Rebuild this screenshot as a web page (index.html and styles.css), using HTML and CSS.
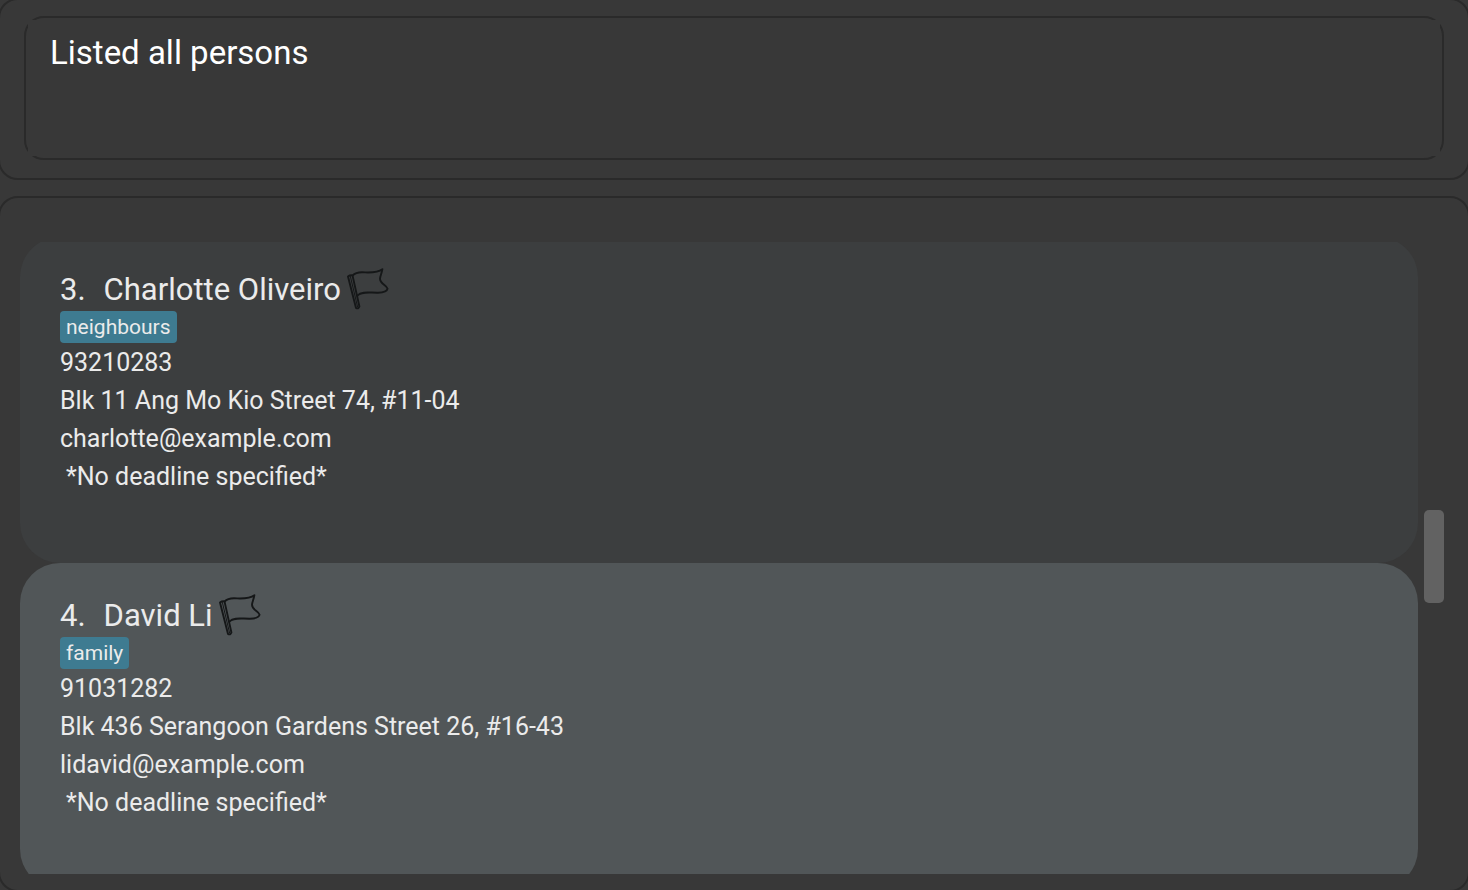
FILE: index.html
```html
<!DOCTYPE html>
<html lang="en">
<head>
<meta charset="utf-8">
<title>Address Book</title>
<link rel="stylesheet" href="styles.css">
</head>
<body>
<svg class="defs" aria-hidden="true">
  <symbol id="flag" viewBox="0 0 42 42">
    <g fill="none" stroke="currentColor" stroke-width="1.9" stroke-linejoin="round" stroke-linecap="round">
      <path d="M1 8.5 Q3 7 5.5 7.4 L12.4 38.5 Q11.3 41.3 9 40 Z"/>
      <path d="M3.4 8.5 L10.6 39" stroke-width="1"/>
      <path d="M5.5 7.6 C8 5 11 4.3 15 4.3 C22 4.4 30 5.5 35.4 1.2 C34.8 5 33.2 8 33 10.7 C33 15.5 39.5 17.5 40.6 20.7 C40 24 35 24.6 31 24.7 C23 24.9 15 22.8 10.4 27.6"/>
    </g>
  </symbol>
</svg>
<main class="window">
  <section class="panel result">
    <div class="result-box">
      <textarea class="result-text" aria-label="Result" readonly>Listed all persons</textarea>
    </div>
  </section>
  <section class="panel persons">
    <div class="viewport">
      <ul class="list">
        <li class="card">
          <div class="heading"><span class="index">3.</span><h2 class="name">Charlotte Oliveiro</h2><svg class="flag" aria-hidden="true"><use href="#flag"/></svg></div>
          <div class="tags"><span class="tag">neighbours</span></div>
          <p class="field">93210283</p>
          <p class="field">Blk 11 Ang Mo Kio Street 74, #11-04</p>
          <p class="field">charlotte@example.com</p>
          <p class="field deadline">*No deadline specified*</p>
        </li>
        <li class="card alt">
          <div class="heading"><span class="index">4.</span><h2 class="name">David Li</h2><svg class="flag" aria-hidden="true"><use href="#flag"/></svg></div>
          <div class="tags"><span class="tag">family</span></div>
          <p class="field">91031282</p>
          <p class="field">Blk 436 Serangoon Gardens Street 26, #16-43</p>
          <p class="field">lidavid@example.com</p>
          <p class="field deadline">*No deadline specified*</p>
        </li>
      </ul>
    </div>
    <div class="track"><div class="thumb"></div></div>
  </section>
</main>
</body>
</html>
```
FILE: styles.css
```css
* { box-sizing: border-box; }
body {
  margin: 0;
  overflow: hidden;
  background: #383838;
  color: #ebebeb;
  font-family: Roboto, "Liberation Sans", sans-serif;
}
.defs { display: none; }
.window {
  display: flex;
  flex-direction: column;
  gap: 16px;
  height: 100vh;
}
.panel {
  margin: 0 -2px;
  border: 2px solid #2a2a2a;
  border-radius: 20px;
}
.result {
  margin-top: -2px;
  padding: 16px 24px 18px;
}
.result-box {
  height: 144px;
  padding: 2px;
  border: 2px solid #2a2a2a;
  border-radius: 20px;
}
.result-text {
  display: block;
  width: 100%;
  height: 100%;
  padding: 13px 22px;
  border: 0;
  outline: 0;
  resize: none;
  background: #383838;
  color: #fff;
  font: inherit;
  font-size: 33px;
  line-height: 40px;
}
.persons {
  display: flex;
  flex: 1;
  gap: 6px;
  min-height: 0;
  margin-bottom: -2px;
  padding: 44px 24px 16px 20px;
}
.viewport {
  flex: 1;
  overflow: hidden;
}
/* The list is scrolled a little past the top of its third card. */
.list {
  margin: -5px 0 0;
  padding: 0;
  list-style: none;
}
.card {
  padding: 32px 40px 68px;
  border-radius: 40px;
  background: #3c3e3f;
}
.alt { background: #515658; }
.heading {
  display: flex;
  align-items: center;
  height: 40px;
  gap: 18px;
}
.index,
.name {
  margin: 0;
  padding-top: 2px;
  font-size: 31px;
  font-weight: 400;
  line-height: 40px;
}
.flag {
  width: 42px;
  height: 42px;
  margin-left: -12px;
  color: #151718;
}
.tags {
  display: flex;
  padding-top: 2px;
}
.tag {
  padding: 1px 6px;
  border-radius: 4px;
  background: #3e7b91;
  font-size: 21px;
  line-height: 30px;
}
.field {
  margin: 0;
  padding-top: 2px;
  font-size: 25px;
  line-height: 36px;
}
.deadline { padding-left: 6px; }
.track {
  display: flex;
  flex-direction: column;
  width: 20px;
  padding-top: 268px;
}
.thumb {
  height: 93px;
  border-radius: 5px;
  background: #626262;
}
```
